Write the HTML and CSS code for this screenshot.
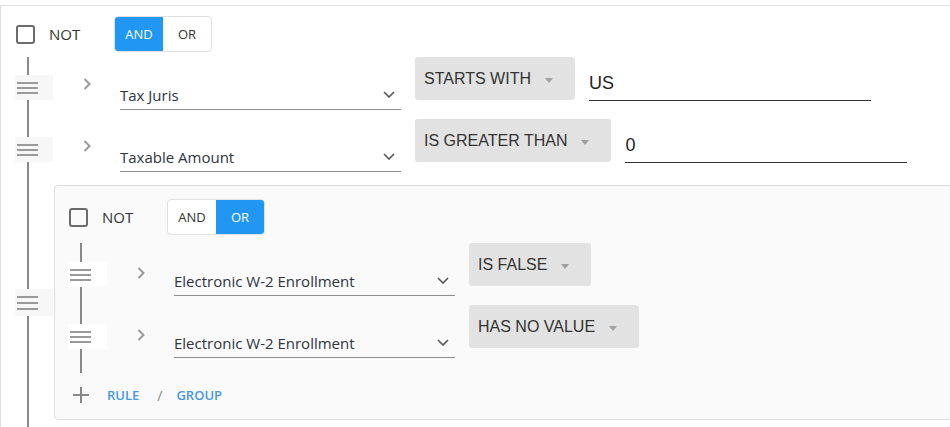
FILE: index.html
```html
<!DOCTYPE html>
<html>
<head>
<meta charset="utf-8">
<link rel="stylesheet" href="styles.css">
</head>
<body>
<div class="qb">
  <div class="group root">
    <div class="group-header">
      <span class="checkbox"></span><span class="not">NOT</span>
      <div class="toggle"><span class="seg active">AND</span><span class="seg">OR</span></div>
    </div>
    <div class="rules root-rules">
      <div class="rule">
        <div class="handle"><i></i><i></i><i></i></div>
        <svg class="expand" width="8" height="12" viewBox="0 0 8 12"><polyline points="1.5,1 6.5,6 1.5,11" fill="none" stroke="#9a9a9a" stroke-width="2"/></svg>
        <div class="field"><span class="field-text">Tax Juris</span><svg class="chev" width="12" height="7" viewBox="0 0 12 7"><polyline points="1,1 6,6 11,1" fill="none" stroke="#555" stroke-width="1.6"/></svg></div>
        <div class="op"><span>STARTS WITH</span><span class="caret"></span></div>
        <div class="value">US</div>
      </div>
      <div class="rule">
        <div class="handle"><i></i><i></i><i></i></div>
        <svg class="expand" width="8" height="12" viewBox="0 0 8 12"><polyline points="1.5,1 6.5,6 1.5,11" fill="none" stroke="#9a9a9a" stroke-width="2"/></svg>
        <div class="field"><span class="field-text">Taxable Amount</span><svg class="chev" width="12" height="7" viewBox="0 0 12 7"><polyline points="1,1 6,6 11,1" fill="none" stroke="#555" stroke-width="1.6"/></svg></div>
        <div class="op"><span>IS GREATER THAN</span><span class="caret"></span></div>
        <div class="value">0</div>
      </div>
      <div class="rule group-row">
        <div class="handle big"><i></i><i></i><i></i></div>
        <div class="group nested">
          <div class="group-header">
            <span class="checkbox"></span><span class="not">NOT</span>
            <div class="toggle"><span class="seg">AND</span><span class="seg active">OR</span></div>
          </div>
          <div class="rules nested-rules">
            <div class="rule">
              <div class="handle"><i></i><i></i><i></i></div>
              <svg class="expand" width="8" height="12" viewBox="0 0 8 12"><polyline points="1.5,1 6.5,6 1.5,11" fill="none" stroke="#9a9a9a" stroke-width="2"/></svg>
              <div class="field"><span class="field-text">Electronic W-2 Enrollment</span><svg class="chev" width="12" height="7" viewBox="0 0 12 7"><polyline points="1,1 6,6 11,1" fill="none" stroke="#555" stroke-width="1.6"/></svg></div>
              <div class="op"><span>IS FALSE</span><span class="caret"></span></div>
            </div>
            <div class="rule">
              <div class="handle"><i></i><i></i><i></i></div>
              <svg class="expand" width="8" height="12" viewBox="0 0 8 12"><polyline points="1.5,1 6.5,6 1.5,11" fill="none" stroke="#9a9a9a" stroke-width="2"/></svg>
              <div class="field"><span class="field-text">Electronic W-2 Enrollment</span><svg class="chev" width="12" height="7" viewBox="0 0 12 7"><polyline points="1,1 6,6 11,1" fill="none" stroke="#555" stroke-width="1.6"/></svg></div>
              <div class="op"><span>HAS NO VALUE</span><span class="caret"></span></div>
            </div>
          </div>
          <div class="add-row">
            <svg class="plus" width="16" height="16" viewBox="0 0 16 16"><path d="M8 0V16M0 8H16" stroke="#888" stroke-width="2"/></svg>
            <span class="add-link">RULE</span>
            <span class="slash">/</span>
            <span class="add-link group-link">GROUP</span>
          </div>
        </div>
      </div>
    </div>
  </div>
</div>
</body>
</html>
```

FILE: styles.css
```css
html, body {
  margin: 0;
  padding: 0;
  background: #ffffff;
  overflow: hidden;
  height: 427px;
}

body {
  font-family: "Open Sans", "Liberation Sans", sans-serif;
  color: #333;
}

.qb {
  margin-top: 5px;
  width: calc(100% + 40px);
  border-top: 1px solid #e0e0e0;
  border-left: 1px solid #dcdcdc;
  box-sizing: border-box;
  height: 500px;
}

.group.root {
  padding: 10px 0 0 14px;
}

.group.nested {
  flex: 1;
  margin-left: 1px;
  background: #fafafa;
  border: 1px solid #dedede;
  border-radius: 4px;
  padding: 13px 0 2px 13px;
}

.group-header {
  display: flex;
  align-items: center;
  height: 36px;
}

.checkbox {
  margin-left: 1px;
  width: 19px;
  height: 19px;
  box-sizing: border-box;
  border: 2px solid #6b6b6b;
  border-radius: 3px;
  flex: none;
}

.not {
  margin-left: 14px;
  width: 65px;
  font-size: 15px;
  color: #333;
}

.toggle {
  display: flex;
  height: 36px;
  box-sizing: border-box;
  border: 1px solid #e0e0e0;
  border-radius: 4px;
  overflow: hidden;
  background: #fff;
}

.seg {
  width: 48px;
  display: flex;
  align-items: center;
  justify-content: center;
  font-size: 13px;
  color: #333;
}

.seg.active {
  background: #2196f3;
  color: #fff;
}

.rules {
  display: flex;
  flex-direction: column;
  gap: 9px;
  background-image: linear-gradient(#8a8a8a, #8a8a8a);
  background-repeat: no-repeat;
  background-size: 2px 100%;
  background-position: 12px 0;
}

.root-rules {
  margin-top: 5px;
  padding-bottom: 40px;
}

.nested-rules {
  margin-top: 8px;
  padding-bottom: 15px;
}

.rule {
  display: flex;
  align-items: flex-start;
  height: 53px;
}

.rule.group-row {
  height: auto;
  align-items: center;
  margin-top: 4px;
}

.handle {
  width: 38px;
  height: 25px;
  margin-top: 18px;
  background: #f7f7f7;
  display: flex;
  flex-direction: column;
  justify-content: center;
  gap: 3px;
  padding-left: 2px;
  box-sizing: border-box;
  flex: none;
}

.nested .handle {
  background: #ffffff;
  width: 39px;
  margin-top: 19px;
}

.handle i {
  display: block;
  width: 21px;
  height: 2px;
  background: #9a9a9a;
}

.handle.big {
  height: 27px;
  margin-top: 0;
  gap: 4px;
}

.expand {
  margin-left: 30px;
  margin-top: 21px;
  flex: none;
}

.nested .expand {
  margin-top: 24px;
}

.field {
  margin-left: 29px;
  width: 281px;
  height: 53px;
  box-sizing: border-box;
  border-bottom: 1px solid #8e8e8e;
  display: flex;
  align-items: flex-end;
  justify-content: space-between;
  padding-bottom: 4px;
  flex: none;
}

.field-text {
  font-size: 15px;
  color: #2e3440;
  line-height: 20px;
}

.chev {
  margin-right: 6px;
  margin-bottom: 7px;
}

.op {
  margin-left: 14px;
  height: 43px;
  box-sizing: border-box;
  background: #e2e2e2;
  border-radius: 3px;
  padding: 0 22px 0 9px;
  display: flex;
  align-items: center;
  font-family: "Liberation Sans", Arial, sans-serif;
  font-size: 16px;
  color: #333;
  flex: none;
}

.caret {
  margin-left: 14px;
  margin-top: 3px;
  width: 0;
  height: 0;
  border-left: 4.5px solid transparent;
  border-right: 4.5px solid transparent;
  border-top: 5px solid #a0a0a0;
}

.value {
  margin-left: 14px;
  width: 282px;
  height: 44px;
  box-sizing: border-box;
  border-bottom: 1px solid #333;
  display: flex;
  align-items: flex-end;
  padding-bottom: 6px;
  font-family: "Liberation Sans", Arial, sans-serif;
  font-size: 18px;
  color: #222;
  flex: none;
}

.add-row {
  display: flex;
  align-items: center;
  height: 44px;
  padding-left: 5px;
}

.plus {
  flex: none;
}

.add-link {
  font-size: 13px;
  font-weight: 600;
  color: #4598e6;
  margin-left: 18px;
}

.slash {
  margin-left: 18px;
  font-size: 14px;
  color: #8a8a8a;
}

.add-link.group-link {
  margin-left: 14px;
}
```
